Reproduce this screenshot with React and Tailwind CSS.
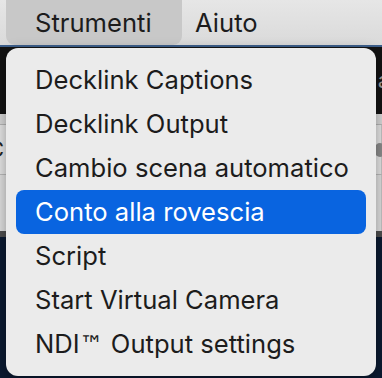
import React from "react";

const items = [
  "Decklink Captions",
  "Decklink Output",
  "Cambio scena automatico",
  "Conto alla rovescia",
  "Script",
  "Start Virtual Camera",
  "NDI",
];

export default function App() {
  return (
    <div
      className="relative w-[382px] h-[378px] overflow-hidden bg-[#0b1a31]"
      style={{ fontFamily: "Inter, 'Noto Sans', sans-serif" }}
    >
      {/* menu bar */}
      <div className="flex h-[45px] items-stretch bg-gradient-to-b from-[#e6e6e6] to-[#dadada] text-[25.6px] text-[#1c1c1c]">
        <div className="ml-[6px] flex w-[176px] items-center rounded-b-[9px] bg-[#c8c8c8] pl-[29px] leading-[45px]">
          Strumenti
        </div>
        <div className="ml-[13px] flex items-center leading-[45px]">Aiuto</div>
      </div>
      <div className="h-[2px] bg-[#3d5f8b]" />
      {/* underlying window */}
      <div className="flex h-[67px] items-center justify-end bg-[#131313]">
        <span className="mr-[-8px] text-[22px] text-[#9a9a9a]">a</span>
      </div>
      <div className="h-[10px] bg-[#d6d6d6]" />
      <div className="h-px bg-[#b4b4b4]" />
      <div className="flex h-[49px] items-center justify-between border-r border-[#c2c2c2] bg-[#e3e3e3]">
        <span className="ml-[-12px] text-[22px] text-[#222]">C</span>
        <span className="mr-[-4px] h-[14px] w-[10px] rounded-full bg-[#8a8a8a]" />
      </div>
      <div className="h-px bg-[#b9b9b9]" />
      <div className="h-[56px] border-r border-[#c2c2c2] bg-[#dedede]" />
      <div className="h-[6px] bg-[#4e4e4e]" />

      {/* dropdown menu */}
      <div className="absolute left-[6px] top-[48px] w-[370px] rounded-[12px] bg-[#ebebeb] px-[10px] py-[10px] shadow-[0_4px_14px_rgba(0,0,0,0.35)]">
        {items.map((t, i) => (
          <div
            key={t}
            className={
              i === 3
                ? "h-[44px] rounded-[8px] bg-[#0964e0] pl-[19px] text-[25.6px] leading-[44px] text-white"
                : "h-[44px] rounded-[8px] pl-[19px] text-[25.6px] leading-[44px] text-[#1c1c1c]"
            }
          >
            {t === "NDI" ? (
              <>
                NDI
                <span style={{ fontFamily: "'DejaVu Sans', sans-serif" }} className="text-[24px]">
                  ™
                </span>{" "}
                Output settings
              </>
            ) : (
              t
            )}
          </div>
        ))}
      </div>
    </div>
  );
}
